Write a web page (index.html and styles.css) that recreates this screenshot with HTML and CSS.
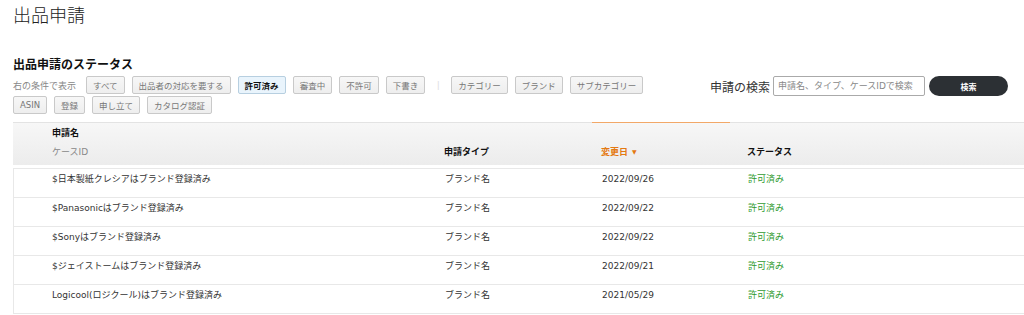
FILE: index.html
```html
<!DOCTYPE html>
<html lang="ja">
<head>
    <meta charset="UTF-8">
    <title>出品申請</title>
    <link rel="stylesheet" href="styles.css">
</head>
<body>
    <div class="page">
        <h1 class="page-title">出品申請</h1>
        <h2 class="section-title">出品申請のステータス</h2>

        <div class="toolbar">
            <div class="filters">
                <span class="filter-label">右の条件で表示</span>
                <button class="chip">すべて</button>
                <button class="chip">出品者の対応を要する</button>
                <button class="chip active">許可済み</button>
                <button class="chip">審査中</button>
                <button class="chip">不許可</button>
                <button class="chip">下書き</button>
                <span class="sep">|</span>
                <button class="chip">カテゴリー</button>
                <button class="chip">ブランド</button>
                <button class="chip">サブカテゴリー</button>
                <button class="chip">ASIN</button>
                <button class="chip">登録</button>
                <button class="chip">申し立て</button>
                <button class="chip">カタログ認証</button>
            </div>
            <div class="search">
                <label for="q">申請の検索</label>
                <input type="text" id="q" placeholder="申請名、タイプ、ケースIDで検索">
                <button class="search-btn">検索</button>
            </div>
        </div>

        <div class="table">
            <div class="thead">
                <div class="th col-name">
                    <div class="strong">申請名</div>
                    <div class="sub">ケースID</div>
                </div>
                <div class="th strong">申請タイプ</div>
                <div class="th sorted">変更日 <span class="caret">▼</span></div>
                <div class="th strong">ステータス</div>
            </div>
            <div class="tbody">
                <div class="tr">
                    <div class="td col-name">$日本製紙クレシアはブランド登録済み</div>
                    <div class="td">ブランド名</div>
                    <div class="td">2022/09/26</div>
                    <div class="td ok">許可済み</div>
                </div>
                <div class="tr">
                    <div class="td col-name">$Panasonicはブランド登録済み</div>
                    <div class="td">ブランド名</div>
                    <div class="td">2022/09/22</div>
                    <div class="td ok">許可済み</div>
                </div>
                <div class="tr">
                    <div class="td col-name">$Sonyはブランド登録済み</div>
                    <div class="td">ブランド名</div>
                    <div class="td">2022/09/22</div>
                    <div class="td ok">許可済み</div>
                </div>
                <div class="tr">
                    <div class="td col-name">$ジェイストームはブランド登録済み</div>
                    <div class="td">ブランド名</div>
                    <div class="td">2022/09/21</div>
                    <div class="td ok">許可済み</div>
                </div>
                <div class="tr">
                    <div class="td col-name">Logicool(ロジクール)はブランド登録済み</div>
                    <div class="td">ブランド名</div>
                    <div class="td">2021/05/29</div>
                    <div class="td ok">許可済み</div>
                </div>
            </div>
        </div>
    </div>
</body>
</html>
```

FILE: styles.css
```css
*{
    margin: 0;
    padding: 0;
    box-sizing: border-box;
}
body{
    background: #fff;
    color: #333;
    font-family: "DejaVu Sans", "Noto Sans CJK JP", sans-serif;
    font-size: 9px;
    overflow: hidden;
}
.page{
    padding-left: 13px;
}
.page-title{
    font-family: "Noto Sans CJK JP", sans-serif;
    font-size: 18px;
    font-weight: 300;
    line-height: 28px;
    color: #222;
}
.section-title{
    font-family: "Noto Sans CJK JP", sans-serif;
    font-size: 12px;
    font-weight: 700;
    line-height: 16px;
    margin-top: 28px;
    color: #111;
}
.toolbar{
    display: flex;
    align-items: flex-start;
    margin-top: 4px;
}
.filters{
    width: 660px;
    display: flex;
    flex-wrap: wrap;
    align-items: center;
    gap: 2px 7px;
}
.filter-label{
    color: #888;
    font-size: 9px;
    margin-right: 3px;
}
.chip{
    height: 18px;
    padding: 0 6px;
    border: 1px solid #c9c9c9;
    border-radius: 2px;
    background: linear-gradient(#f7f7f7, #eeeeee);
    color: #777;
    font-family: inherit;
    font-size: 8.5px;
}
.chip.active{
    background: #e9f4fc;
    border-color: #b7cfe0;
    color: #111;
    font-weight: 700;
}
.sep{
    color: #ddd;
    width: 12px;
    text-align: center;
}
.search{
    margin-left: auto;
    margin-right: 16px;
    display: flex;
    align-items: center;
    gap: 4px;
}
.search label{
    font-family: "Noto Sans CJK JP", sans-serif;
    font-size: 12px;
    color: #333;
    margin-right: -1px;
}
.search input{
    width: 152px;
    height: 20px;
    border: 1px solid #aaa;
    border-radius: 2px;
    padding: 0 4px;
    font-family: inherit;
    font-size: 9px;
}
.search input::placeholder{
    color: #888;
}
.search-btn{
    width: 79px;
    height: 20px;
    border: none;
    border-radius: 10px;
    background: #2c3034;
    color: #fff;
    font-family: inherit;
    font-size: 8px;
    font-weight: 700;
}
.table{
    margin-top: 8px;
}
.thead, .tr{
    display: grid;
    grid-template-columns: 422px 157px 146px 1fr;
}
.thead{
    height: 43px;
    border-top: 1px solid #e3e3e3;
    background: linear-gradient(#f7f7f7, #ececec);
    align-items: end;
}
.th{
    padding: 0 0 7px 9px;
    line-height: 12px;
    color: #111;
}
.th.col-name{
    padding-left: 39px;
}
.strong{
    font-weight: 700;
}
.sub{
    color: #888;
    margin-top: 7px;
}
.sorted{
    position: relative;
    color: #e47911;
    font-weight: 700;
    height: 100%;
    display: flex;
    align-items: flex-end;
    gap: 4px;
}
.sorted::before{
    content: "";
    position: absolute;
    top: -1px;
    left: 0;
    width: 138px;
    height: 1px;
    background: #f2a868;
}
.caret{
    font-size: 6px;
    line-height: 12px;
}
.tbody{
    margin-top: 3px;
    border-top: 1px solid #e8e8e8;
    border-left: 1px solid #e8e8e8;
}
.tr{
    height: 29px;
    border-bottom: 1px solid #e8e8e8;
}
.td{
    padding: 4px 0 0 9px;
    line-height: 12px;
    color: #333;
}
.td.col-name{
    padding-left: 38px;
}
.ok{
    color: #2f9a2f;
}
```
